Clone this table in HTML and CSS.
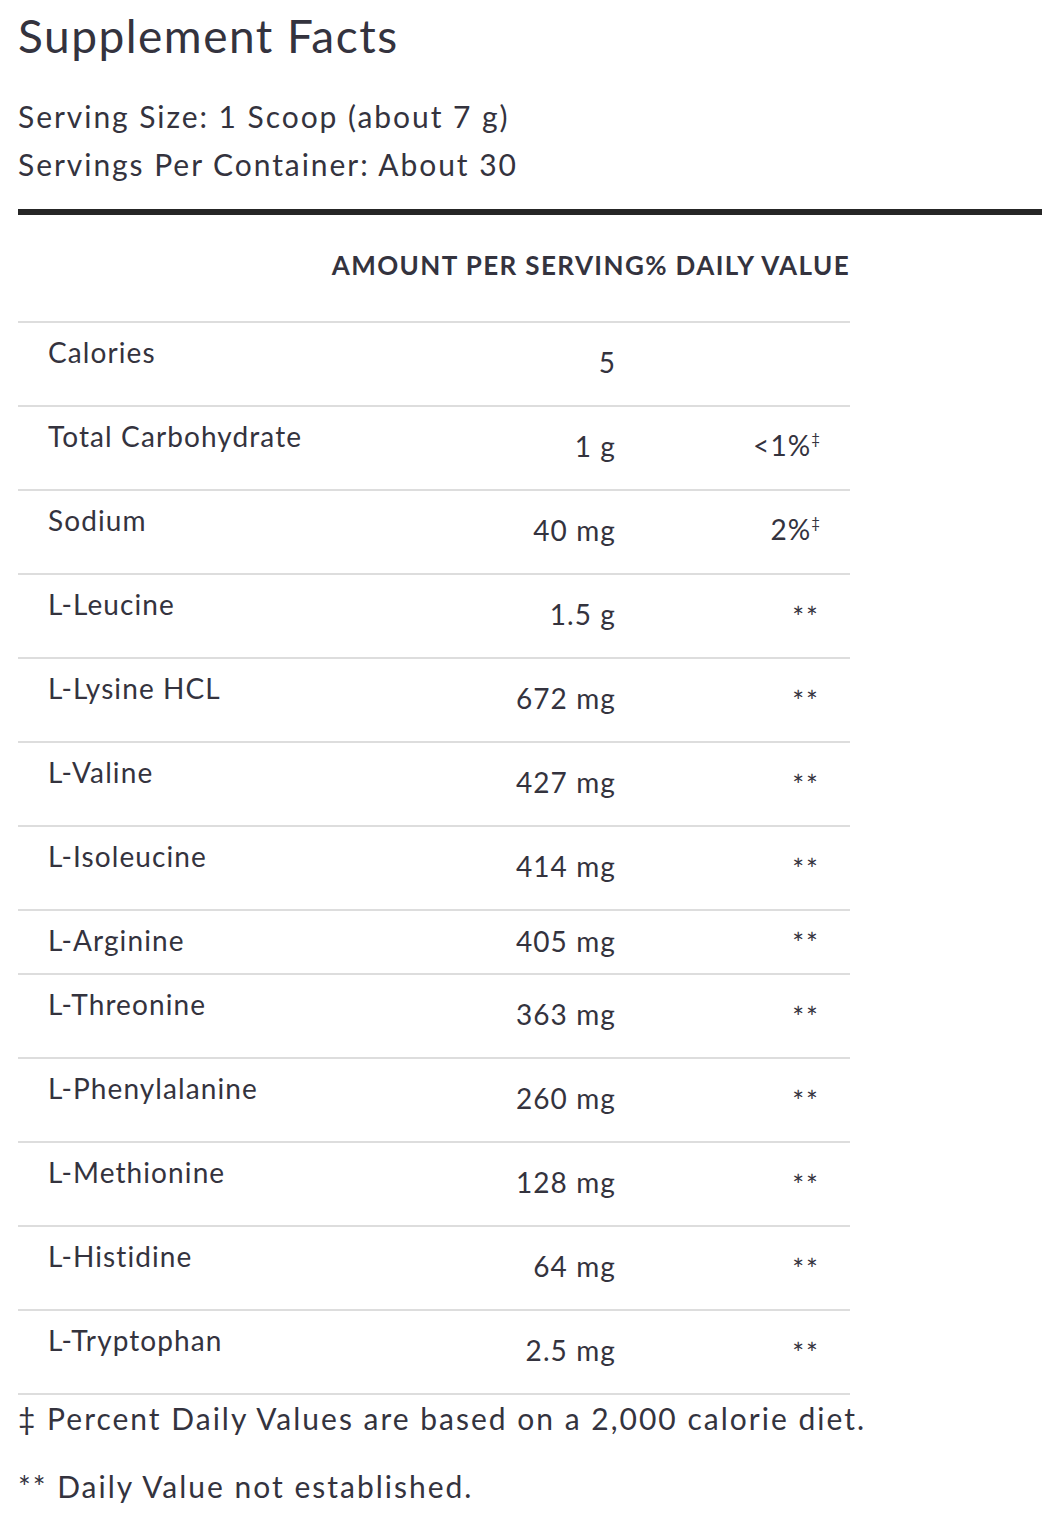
FILE: index.html
```html
<!DOCTYPE html>
<html lang="en">
<head>
<meta charset="utf-8">
<title>Supplement Facts</title>
<link rel="stylesheet" href="styles.css">
</head>
<body>
<section class="facts">
  <h1 class="title">Supplement Facts</h1>
  <div class="serving">
    <p class="serving-line">Serving Size: 1 Scoop (about 7 g)</p>
    <p class="serving-line">Servings Per Container: About 30</p>
  </div>
  <div class="rule"></div>
  <div class="table">
    <div class="head"><span>AMOUNT PER SERVING</span><span>% DAILY VALUE</span></div>
    <div class="row"><span class="name">Calories</span><span class="amt">5</span><span class="dv"></span></div>
    <div class="row"><span class="name">Total Carbohydrate</span><span class="amt">1 g</span><span class="dv">&lt;1%<sup class="mark">‡</sup></span></div>
    <div class="row"><span class="name">Sodium</span><span class="amt">40 mg</span><span class="dv">2%<sup class="mark">‡</sup></span></div>
    <div class="row"><span class="name">L-Leucine</span><span class="amt">1.5 g</span><span class="dv dv-na">**</span></div>
    <div class="row"><span class="name">L-Lysine HCL</span><span class="amt">672 mg</span><span class="dv dv-na">**</span></div>
    <div class="row"><span class="name">L-Valine</span><span class="amt">427 mg</span><span class="dv dv-na">**</span></div>
    <div class="row"><span class="name">L-Isoleucine</span><span class="amt">414 mg</span><span class="dv dv-na">**</span></div>
    <div class="row row-flat"><span class="name">L-Arginine</span><span class="amt">405 mg</span><span class="dv dv-na">**</span></div>
    <div class="row"><span class="name">L-Threonine</span><span class="amt">363 mg</span><span class="dv dv-na">**</span></div>
    <div class="row"><span class="name">L-Phenylalanine</span><span class="amt">260 mg</span><span class="dv dv-na">**</span></div>
    <div class="row"><span class="name">L-Methionine</span><span class="amt">128 mg</span><span class="dv dv-na">**</span></div>
    <div class="row"><span class="name">L-Histidine</span><span class="amt">64 mg</span><span class="dv dv-na">**</span></div>
    <div class="row row-last"><span class="name">L-Tryptophan</span><span class="amt">2.5 mg</span><span class="dv dv-na">**</span></div>
  </div>
  <p class="note">‡ Percent Daily Values are based on a 2,000 calorie diet.</p>
  <p class="note">** Daily Value not established.</p>
</section>
</body>
</html>
```

FILE: styles.css
```css
html, body {
  margin: 0;
  padding: 0;
  background: #ffffff;
}

body {
  font-family: Lato, "Open Sans", sans-serif;
  color: #34333e;
}

.facts {
  padding-left: 18px;
}

.title {
  margin: 8px 0 0;
  font-size: 46px;
  line-height: 56px;
  font-weight: 400;
  letter-spacing: 1.5px;
}

.serving {
  margin-top: 28px;
}

.serving-line {
  margin: 0;
  font-size: 30px;
  line-height: 48px;
  letter-spacing: 1.95px;
}

.rule {
  margin-top: 21px;
  height: 6px;
  background: #262626;
}

.table {
  width: 832px;
}

.head {
  display: flex;
  justify-content: flex-end;
  padding: 35px 0 40px 0;
  font-size: 26px;
  line-height: 31px;
  font-weight: 700;
  letter-spacing: 1.4px;
}

.row {
  display: grid;
  grid-template-columns: 397px 201px 234px;
  align-items: start;
  height: 82px;
  border-top: 2px solid #dddddd;
  font-size: 28px;
  line-height: 34px;
  letter-spacing: 1.1px;
}

.row-flat {
  height: 62px;
}

.row-last {
  border-bottom: 2px solid #dddddd;
}

.name {
  padding: 12px 0 0 30px;
}

.amt {
  padding-top: 22px;
  text-align: right;
}

.dv {
  padding: 21px 30px 0 0;
  text-align: right;
}

.dv-na {
  padding-top: 25px;
  letter-spacing: 2px;
}

.row-flat .amt {
  padding-top: 13px;
}

.row-flat .dv-na {
  padding-top: 15px;
}

.mark {
  font-size: 15px;
  line-height: 0;
  vertical-align: 12px;
  letter-spacing: 0;
}

.note {
  margin: 5px 0 0;
  font-size: 30px;
  line-height: 36px;
  letter-spacing: 2px;
}

.note + .note {
  margin-top: 32px;
}
```
